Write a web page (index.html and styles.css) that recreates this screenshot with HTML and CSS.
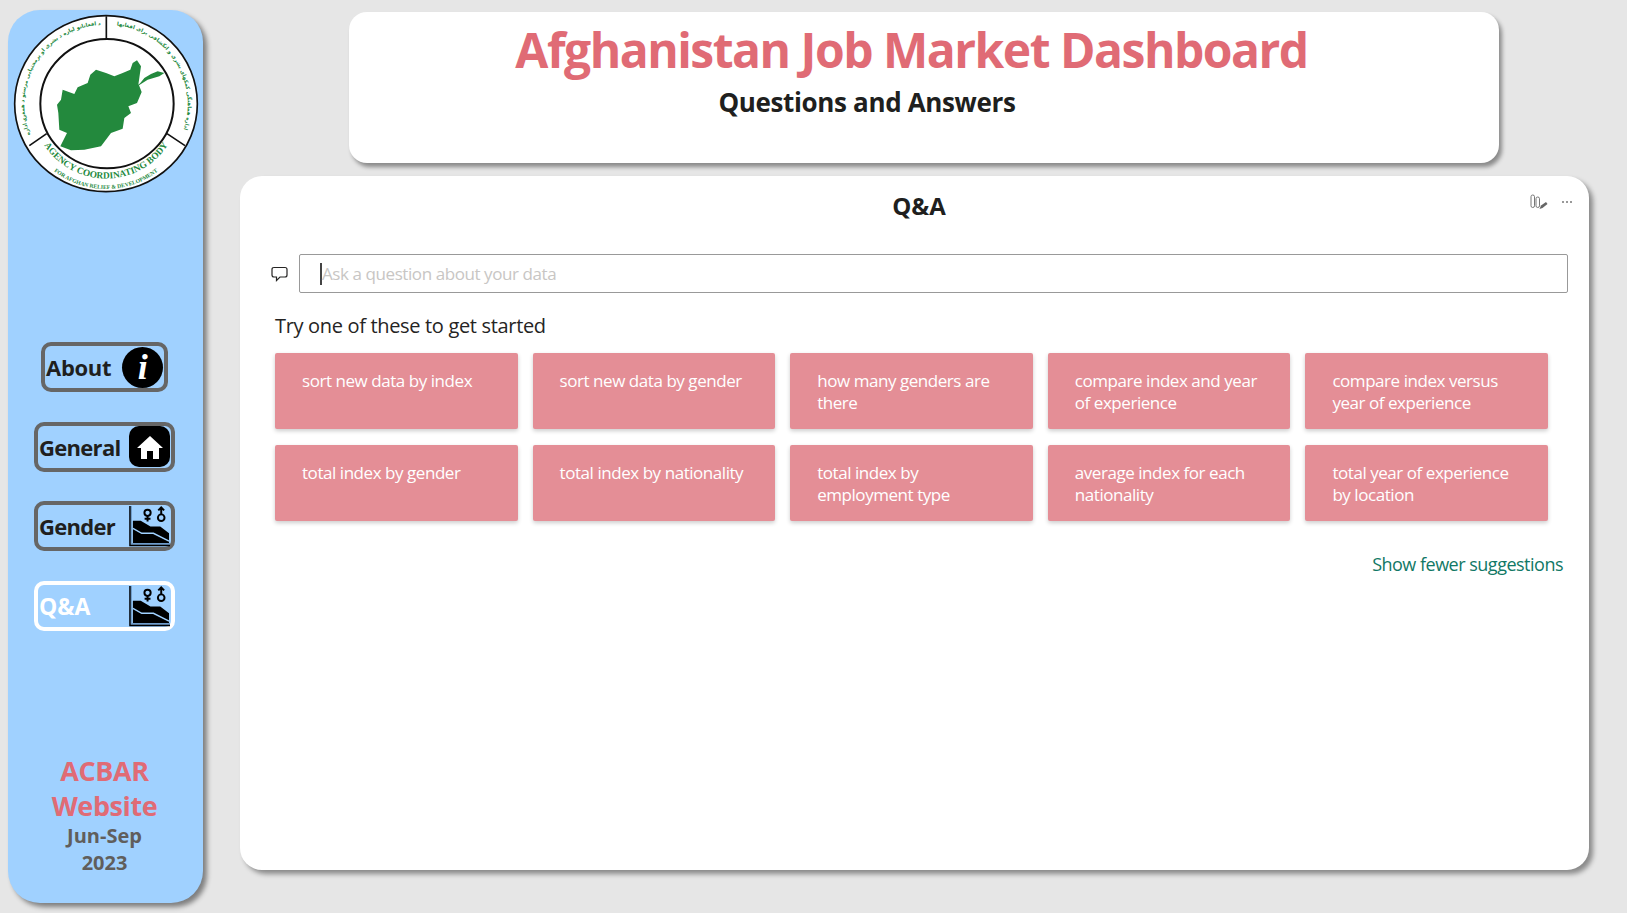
FILE: index.html
```html
<!DOCTYPE html>
<html lang="en">
<head>
    <meta charset="UTF-8">
    <title>Afghanistan Job Market Dashboard</title>
    <link rel="stylesheet" href="styles.css">
</head>
<body>
    <svg class="defs" width="0" height="0">
        <symbol id="chart" viewBox="0 0 42 42">
            <path d="M0 0H3V38H42V41H0Z" fill="#6f9ccb"/>
            <path d="M1 0V40.500H42" fill="none" stroke="#000" stroke-width="1.400"/>
            <path d="M4 15H12L22 21H32L41 28V38H4Z" fill="#000"/>
            <path d="M4 23L13 28H25L41 36" fill="none" stroke="#a0d1ff" stroke-width="1.500"/>
            <circle cx="19" cy="7" r="3.200" fill="none" stroke="#000" stroke-width="2"/>
            <path d="M19 10V16M16 13H22" fill="none" stroke="#000" stroke-width="2"/>
            <circle cx="33" cy="12" r="3.400" fill="none" stroke="#000" stroke-width="2"/>
            <path d="M33 9V2M30 4.500L33 1.500L36 4.500" fill="none" stroke="#000" stroke-width="2"/>
        </symbol>
    </svg>

    <div class="page">
        <aside class="sidebar">
            <svg class="logo" viewBox="30 40 570 540">
                <defs>
                    <path id="arcRight" d="M325 76A238 238 0 0 1 540 410"/>
                    <path id="arcLeft" d="M90 410A238 238 0 0 1 305 76"/>
                    <path id="arcBottom" d="M96 351A222 222 0 0 0 534 351"/>
                    <path id="arcBottom2" d="M62 351A256 256 0 0 0 568 351"/>
                </defs>
                <ellipse cx="315" cy="312" rx="274" ry="264" fill="#fff" stroke="#111" stroke-width="5"/>
                <ellipse cx="318" cy="312" rx="200" ry="194" fill="#fff" stroke="#111" stroke-width="6"/>
                <path d="M316 50V118M137 402L85 438M498 402L552 438" stroke="#111" stroke-width="5"/>
                <path class="map" transform="translate(150 165)" d="M340 55L320 50L300 58L280 70L268 85L262 90L270 35L258 17L245 25L238 45L215 55L190 65L165 55L135 45L118 60L110 85L80 98L70 118L35 105L30 135L18 150L22 175L25 225L48 235L28 275L60 287L100 285L150 275L180 235L215 222L220 190L240 175L232 155L258 145L272 112L264 92L290 75L325 65Z"/>
                <text class="logo-small"><textPath href="#arcRight" startOffset="50%">اداره هماهنگی کمکهای بشری و انکشافی برای افغانها</textPath></text>
                <text class="logo-small"><textPath href="#arcLeft" startOffset="50%">د افغانانو لپاره د بشری او پرمختیایی مرستو د همغږۍ اداره</textPath></text>
                <text class="logo-big"><textPath href="#arcBottom" startOffset="50%">AGENCY COORDINATING BODY</textPath></text>
                <text class="logo-sub"><textPath href="#arcBottom2" startOffset="50%">FOR AFGHAN RELIEF &amp; DEVELOPMENT</textPath></text>
            </svg>

            <nav class="nav">
                <a class="nav-btn nav-about" href="#about">
                    <span>About</span>
                    <span class="icon-info">i</span>
                </a>
                <a class="nav-btn" href="#general">
                    <span>General</span>
                    <span class="icon-home">
                        <svg viewBox="0 0 26 24" width="26" height="24"><path d="M13 1L26 13H22V24H16V16H10V24H4V13H0Z" fill="#fff"/></svg>
                    </span>
                </a>
                <a class="nav-btn" href="#gender">
                    <span>Gender</span>
                    <svg class="icon-chart"><use href="#chart"/></svg>
                </a>
                <a class="nav-btn nav-active" href="#qa">
                    <span>Q&amp;A</span>
                    <svg class="icon-chart"><use href="#chart"/></svg>
                </a>
            </nav>

            <div class="side-footer">
                <div class="side-link">ACBAR Website</div>
                <div class="side-date">Jun-Sep 2023</div>
            </div>
        </aside>

        <main class="main">
            <header class="header">
                <h1>Afghanistan Job Market Dashboard</h1>
                <h2>Questions and Answers</h2>
            </header>

            <section class="card">
                <div class="card-top">
                    <h3>Q&amp;A</h3>
                    <div class="card-tools">
                        <svg viewBox="0 0 18 16" width="18" height="16">
                            <rect x="1" y="1" width="3.500" height="12.500" rx="1.700" fill="none" stroke="#777" stroke-width="1"/>
                            <rect x="6" y="3" width="3.500" height="10.500" rx="1.700" fill="none" stroke="#777" stroke-width="1"/>
                            <path d="M9.500 15L11 11.500L16 8L17.500 10L12.500 14Z" fill="#666"/>
                        </svg>
                        <span class="dots">
                            <i></i><i></i><i></i>
                        </span>
                    </div>
                </div>

                <div class="ask">
                    <svg viewBox="0 0 17 16" width="17" height="16">
                        <path d="M3 1.500H14Q16 1.500 16 3.500V9Q16 11 14 11H9L5.500 14.500V11H3Q1 11 1 9V3.500Q1 1.500 3 1.500Z" fill="none" stroke="#252423" stroke-width="1.200"/>
                    </svg>
                    <div class="ask-box"><span class="caret"></span>Ask a question about your data</div>
                </div>

                <p class="try">Try one of these to get started</p>

                <div class="tiles">
                    <div class="tile">sort new data by index</div>
                    <div class="tile">sort new data by gender</div>
                    <div class="tile">how many genders are there</div>
                    <div class="tile">compare index and year of experience</div>
                    <div class="tile">compare index versus year of experience</div>
                    <div class="tile">total index by gender</div>
                    <div class="tile">total index by nationality</div>
                    <div class="tile">total index by employment type</div>
                    <div class="tile">average index for each nationality</div>
                    <div class="tile">total year of experience by location</div>
                </div>

                <div class="fewer">Show fewer suggestions</div>
            </section>
        </main>
    </div>
</body>
</html>
```

FILE: styles.css
```css
* {
    box-sizing: border-box;
}
body {
    font-family: 'Open Sans', 'Noto Sans', sans-serif;
    background-color: #e6e6e6;
    margin: 0;
    padding: 0;
    height: 913px;
    overflow: hidden;
    color: #252423;
}
.defs {
    display: block;
    height: 0;
}
.page {
    display: flex;
    padding: 10px 0 0 8px;
}

/* left panel */
.sidebar {
    width: 195px;
    height: 893px;
    flex-shrink: 0;
    background-color: #a0d1ff;
    border-radius: 32px;
    box-shadow: 4px 4px 5px rgba(0, 0, 0, 0.45);
    display: flex;
    flex-direction: column;
    align-items: center;
}
.logo {
    width: 190px;
    height: 180px;
    margin-top: 3px;
    flex-shrink: 0;
}
.map {
    fill: #23893d;
}
.logo-small {
    font-family: 'DejaVu Sans', sans-serif;
    font-size: 16px;
    font-weight: bold;
    fill: #23893d;
    text-anchor: middle;
}
.logo-big {
    font-family: 'Liberation Serif', serif;
    font-size: 28px;
    font-weight: bold;
    fill: #23893d;
    text-anchor: middle;
}
.logo-sub {
    font-family: 'Liberation Serif', serif;
    font-size: 17px;
    font-weight: bold;
    fill: #23893d;
    text-anchor: middle;
}
.nav {
    margin: 149px 2px 0 0;
    display: flex;
    flex-direction: column;
    align-items: center;
    gap: 29.7px;
}
.nav-btn {
    width: 141px;
    height: 50px;
    border: 4px solid #666;
    border-radius: 10px;
    padding: 0 1px 0 1px;
    display: flex;
    align-items: center;
    justify-content: space-between;
    color: #201f1e;
    font-size: 22px;
    font-weight: 700;
    letter-spacing: -0.7px;
    text-decoration: none;
}
.nav-about {
    width: 127px;
    letter-spacing: -0.3px;
}
.nav-active {
    border-color: #fff;
    color: #fff;
    font-size: 23px;
    letter-spacing: 0;
}
.icon-info {
    width: 41px;
    height: 41px;
    border-radius: 50%;
    background-color: #000;
    color: #fff;
    font-family: 'Liberation Serif', serif;
    font-style: italic;
    font-size: 36px;
    line-height: 40px;
    text-align: center;
}
.icon-home {
    width: 41px;
    height: 41px;
    border-radius: 10px;
    background-color: #000;
    display: flex;
    align-items: center;
    justify-content: center;
}
.icon-chart {
    width: 41px;
    height: 41px;
}
.side-footer {
    margin: 122px 2px 0 0;
    width: 110px;
    text-align: center;
    font-weight: 700;
}
.side-link {
    color: #e06b75;
    font-size: 27px;
    line-height: 35px;
    letter-spacing: -0.4px;
}
.side-date {
    margin-top: -1px;
    color: #605e5c;
    font-size: 20px;
    line-height: 27px;
}

/* right side */
.main {
    flex: 1;
    padding: 2px 38px 0 37px;
    display: flex;
    flex-direction: column;
    gap: 13px;
}
.header {
    width: 1150px;
    height: 151px;
    margin-left: 109px;
    background: #fff;
    border-radius: 18px;
    box-shadow: 3px 4px 4px rgba(0, 0, 0, 0.4);
    text-align: center;
}
.header h1 {
    margin: 0;
    padding: 10px 25px 0 0;
    color: #e06b75;
    font-size: 48px;
    line-height: 56px;
    font-weight: 700;
    letter-spacing: -1.5px;
}
.header h2 {
    margin: 7px 0 0;
    padding-right: 114px;
    color: #201f1e;
    font-size: 26px;
    line-height: 34px;
    font-weight: 700;
    letter-spacing: -0.35px;
}
.card {
    height: 694px;
    background: #fff;
    border-radius: 22px;
    box-shadow: 4px 4px 5px rgba(0, 0, 0, 0.4);
    padding: 0 21px 0 35px;
}
.card-top {
    height: 78px;
    position: relative;
    text-align: center;
}
.card-top h3 {
    margin: 0;
    padding: 15px 5px 0 0;
    font-size: 24px;
    line-height: 30px;
    font-weight: 700;
    color: #201f1e;
}
.card-tools {
    position: absolute;
    top: 18px;
    right: -4px;
    display: flex;
    align-items: center;
    gap: 14px;
}
.dots {
    display: flex;
    gap: 2px;
}
.dots i {
    width: 2px;
    height: 2px;
    background: #777;
    border-radius: 50%;
}
.ask {
    display: flex;
    align-items: center;
    gap: 11px;
    margin-left: -4px;
}
.ask-box {
    flex: 1;
    height: 39px;
    border: 1px solid #999;
    border-radius: 2px;
    padding-left: 20px;
    display: flex;
    align-items: center;
    color: #c8c6c4;
    font-size: 17px;
    letter-spacing: -0.42px;
}
.caret {
    width: 2px;
    height: 22px;
    background: #444;
}
.try {
    margin: 19px 0 0;
    font-size: 20px;
    line-height: 28px;
    letter-spacing: -0.33px;
}
.tiles {
    margin-top: 13px;
    width: 1273px;
    display: grid;
    grid-template-columns: repeat(5, 1fr);
    gap: 16px 15px;
}
.tile {
    height: 76px;
    background-color: #e48e96;
    color: #fff;
    border-radius: 2px;
    box-shadow: 0 2px 4px rgba(0, 0, 0, 0.2);
    padding: 17px 26px 0 27px;
    font-size: 17px;
    line-height: 22px;
    letter-spacing: -0.45px;
}
.fewer {
    margin-top: 31px;
    margin-right: 5px;
    text-align: right;
    color: #117865;
    font-size: 18px;
    line-height: 24px;
    letter-spacing: -0.5px;
}
```
